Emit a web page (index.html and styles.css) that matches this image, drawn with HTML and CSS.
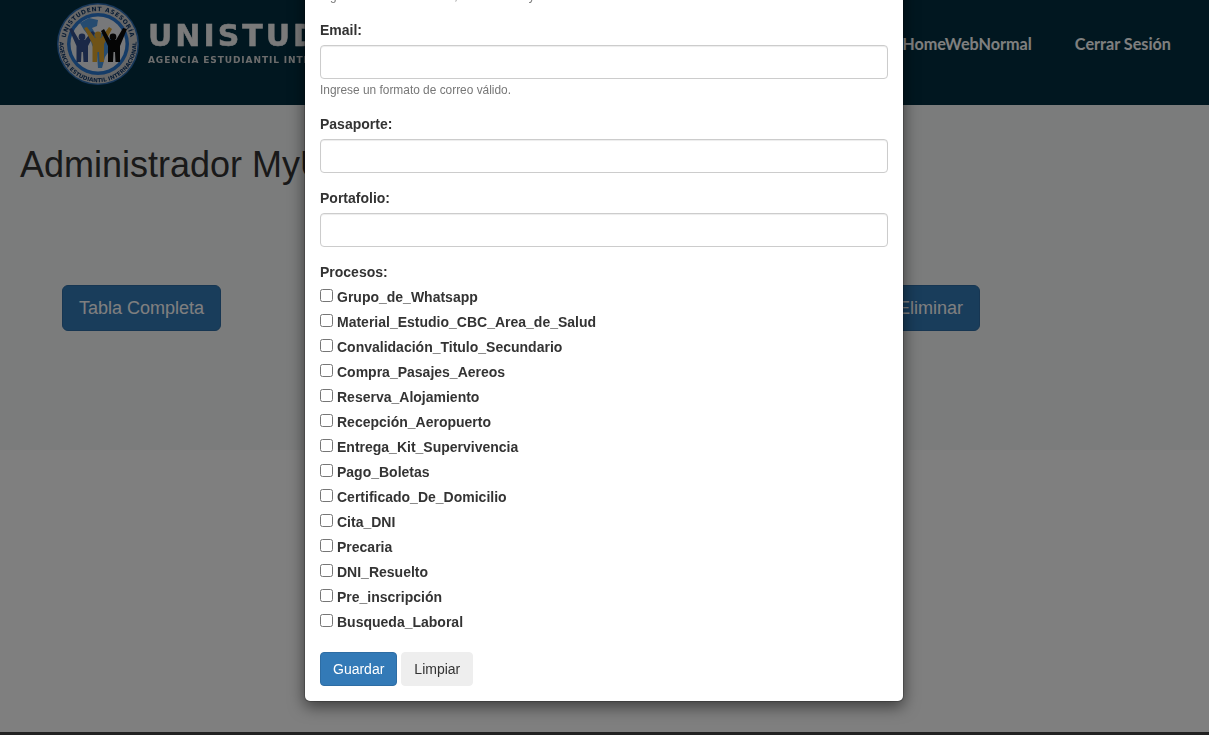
FILE: index.html
```html
<!DOCTYPE html>
<html lang="es">
<head>
    <meta charset="UTF-8">
    <meta name="viewport" content="width=device-width, initial-scale=1.0">
    <title>Administrador MyUnistudent</title>
    <link rel="stylesheet" href="styles.css">
</head>
<body>
    <header class="topbar">
        <a class="brand" href="#">
            <svg class="brand-seal" width="84" height="84" viewBox="0 0 84 84">
                <defs>
                    <path id="arcTop" d="M 9 42 A 33 33 0 0 1 75 42"/>
                    <path id="arcBottom" d="M 4.500 33 A 38.500 38.500 0 1 0 79.500 33"/>
                </defs>
                <circle cx="42" cy="42" r="41" fill="#2f6fb5"/>
                <circle cx="42" cy="42" r="39.5" fill="#cfcfcf"/>
                <circle cx="42" cy="42" r="31" fill="#2a78d0"/>
                <circle cx="42" cy="42" r="27.5" fill="#eef1f4"/>
                <path class="land" d="M24 21 L33 16 L42 18 L41 24 L36 26 L39 31 L46 31 L56 38 L55 46 L49 55 L46 66 L42 66 L41 52 L36 43 L34 35 L28 28 Z"/>
                <g class="person person-navy">
                    <circle cx="26" cy="35" r="3.4"/>
                    <path d="M13 27 L16 26 L23 38 L29 38 L36 29 L39 31 L32 44 L32 60 L27.5 60 L27 50 L25.5 50 L25 60 L20.5 60 L20.5 44 Z"/>
                </g>
                <g class="person person-gold">
                    <circle cx="42" cy="33" r="3.4"/>
                    <path d="M28 26 L31 25 L39 36 L45 36 L53 25 L56 27 L48 42 L48 60 L43.5 60 L43 50 L41.500 50 L41 60 L36.500 60 L36.500 42 Z"/>
                </g>
                <g class="person person-black">
                    <circle cx="57" cy="35" r="3.4"/>
                    <path d="M45 29 L48 27 L54 38 L60 38 L67 26 L71 27 L64 44 L64 60 L59.500 60 L59 50 L57.500 50 L57 60 L52 60 L52 44 Z"/>
                </g>
                <text class="seal-text"><textPath href="#arcTop" startOffset="50%" text-anchor="middle">UNISTUDENT ASESORÍA</textPath></text>
                <text class="seal-text seal-text-small"><textPath href="#arcBottom" startOffset="50%" text-anchor="middle">AGENCIA ESTUDIANTIL INTERNACIONAL</textPath></text>
            </svg>
            <span class="brand-copy">
                <span class="brand-name">UNISTUDENT</span>
                <span class="brand-sub">AGENCIA ESTUDIANTIL INTERNACIONAL</span>
            </span>
        </a>
        <nav class="topnav">
            <a href="#">HomeWebNormal</a>
            <a href="#">Cerrar Sesión</a>
        </nav>
    </header>

    <main class="admin">
        <h1>Administrador MyUnistudent</h1>
        <div class="admin-actions">
            <button class="btn-lg">Tabla Completa</button>
            <button class="btn-lg">Agregar</button>
            <button class="btn-lg">Actualizar</button>
            <button class="btn-lg">Eliminar</button>
        </div>
    </main>
    <div class="page-rest"></div>
    <footer class="page-footer"></footer>

    <div class="backdrop"></div>
    <div class="modal">
        <form class="modal-content">
            <div class="form-group">
                <label for="nombre">Nombre:</label>
                <input type="text" id="nombre">
                <small>Ingrese un nombre válido, sin números y sin símbolos.</small>
            </div>
            <div class="form-group">
                <label for="email">Email:</label>
                <input type="text" id="email">
                <small>Ingrese un formato de correo válido.</small>
            </div>
            <div class="form-group">
                <label for="pasaporte">Pasaporte:</label>
                <input type="text" id="pasaporte">
            </div>
            <div class="form-group">
                <label for="portafolio">Portafolio:</label>
                <input type="text" id="portafolio">
            </div>
            <div class="form-group">
                <label>Procesos:</label>
                <label class="check"><input type="checkbox"> Grupo_de_Whatsapp</label>
                <label class="check"><input type="checkbox"> Material_Estudio_CBC_Area_de_Salud</label>
                <label class="check"><input type="checkbox"> Convalidación_Titulo_Secundario</label>
                <label class="check"><input type="checkbox"> Compra_Pasajes_Aereos</label>
                <label class="check"><input type="checkbox"> Reserva_Alojamiento</label>
                <label class="check"><input type="checkbox"> Recepción_Aeropuerto</label>
                <label class="check"><input type="checkbox"> Entrega_Kit_Supervivencia</label>
                <label class="check"><input type="checkbox"> Pago_Boletas</label>
                <label class="check"><input type="checkbox"> Certificado_De_Domicilio</label>
                <label class="check"><input type="checkbox"> Cita_DNI</label>
                <label class="check"><input type="checkbox"> Precaria</label>
                <label class="check"><input type="checkbox"> DNI_Resuelto</label>
                <label class="check"><input type="checkbox"> Pre_inscripción</label>
                <label class="check"><input type="checkbox"> Busqueda_Laboral</label>
            </div>
            <div class="modal-buttons">
                <button type="button" class="btn btn-primary">Guardar</button>
                <button type="button" class="btn btn-light">Limpiar</button>
            </div>
        </form>
    </div>
</body>
</html>
```

FILE: styles.css
```css
* {
    box-sizing: border-box;
}

html, body {
    height: 100%;
}

body {
    margin: 0;
    display: flex;
    flex-direction: column;
    overflow: hidden;
    font-family: "Liberation Sans", Arial, sans-serif;
    font-size: 14px;
    line-height: 20px;
    color: #333;
    background: #fff;
}

/* barra superior */
.topbar {
    height: 105px;
    flex: none;
    display: flex;
    justify-content: space-between;
    align-items: flex-start;
    padding: 2px 38px 0 56px;
    background: #032f40;
}

.brand {
    display: flex;
    gap: 8px;
    text-decoration: none;
    filter: blur(0.4px);
}

.brand-seal {
    flex: none;
}

.land {
    fill: #4a96e0;
}

.person-navy {
    fill: #34508f;
}

.person-gold {
    fill: #e0a62e;
}

.person-black {
    fill: #0a0a0a;
}

.seal-text {
    font-family: "DejaVu Sans", sans-serif;
    font-size: 6px;
    font-weight: bold;
    letter-spacing: 0.6px;
    fill: #123a6b;
}

.seal-text-small {
    font-size: 5.6px;
    letter-spacing: 0;
}

.brand-copy {
    display: flex;
    flex-direction: column;
    padding-top: 16px;
    white-space: nowrap;
}

.brand-name {
    font-family: "DejaVu Sans", sans-serif;
    font-size: 30px;
    font-weight: bold;
    line-height: 36px;
    letter-spacing: 3px;
    color: #f4f4f4;
    -webkit-text-stroke: 0.5px #f4f4f4;
}

.brand-sub {
    font-family: "DejaVu Sans", sans-serif;
    font-size: 9px;
    font-weight: bold;
    line-height: 12px;
    letter-spacing: 0.9px;
    color: #d8d8d8;
}

.topnav {
    display: flex;
    gap: 43px;
    padding-top: 32px;
}

.topnav a {
    font-family: Lato, sans-serif;
    font-size: 16.2px;
    font-weight: bold;
    color: #fff;
    text-decoration: none;
}

/* contenido */
.admin {
    height: 345px;
    flex: none;
    padding: 40px 20px 0;
    background: #f7f8f9;
}

h1 {
    margin: 0;
    font-size: 36px;
    font-weight: normal;
    line-height: 40px;
}

.admin-actions {
    display: flex;
    justify-content: space-between;
    width: 918px;
    margin: 100px 0 0 42px;
}

.btn-lg {
    padding: 10px 16px;
    border: 1px solid #2e6da4;
    border-radius: 6px;
    font-family: inherit;
    font-size: 18px;
    line-height: 24px;
    color: #fff;
    background: #337ab7;
}

.page-rest {
    flex: 1;
}

.page-footer {
    height: 3px;
    flex: none;
    background: #444;
}

/* modal */
.backdrop {
    position: fixed;
    inset: 0;
    background: rgba(0, 0, 0, 0.5);
}

.modal {
    position: fixed;
    left: 304px;
    bottom: 33px;
    width: 600px;
}

.modal-content {
    padding: 15px;
    background: #fff;
    background-clip: padding-box;
    border: 1px solid rgba(0, 0, 0, 0.2);
    border-radius: 6px;
    box-shadow: 0 5px 15px rgba(0, 0, 0, 0.5);
}

.form-group {
    display: flow-root;
    margin-bottom: 15px;
}

.form-group > label {
    display: block;
    margin-bottom: 5px;
    font-weight: bold;
}

.form-group input[type="text"] {
    display: block;
    width: 100%;
    height: 34px;
    padding: 6px 12px;
    border: 1px solid #ccc;
    border-radius: 4px;
    box-shadow: inset 0 1px 1px rgba(0, 0, 0, 0.075);
}

.form-group small {
    display: block;
    margin-top: 3px;
    font-size: 11.9px;
    line-height: 17px;
    color: #777;
}

.form-group > .check {
    display: flex;
    align-items: flex-start;
    gap: 4px;
    height: 20px;
}

.check input {
    margin: 2px 0 0;
}

.modal-buttons {
    display: flex;
    gap: 4px;
}

.btn {
    height: 34px;
    padding: 6px 12px;
    border: 1px solid transparent;
    border-radius: 4px;
    font-family: inherit;
    font-size: 14px;
    line-height: 20px;
}

.btn-primary {
    color: #fff;
    background: #337ab7;
    border-color: #2e6da4;
}

.btn-light {
    color: #333;
    background: #eee;
    border-color: #eee;
}
```
